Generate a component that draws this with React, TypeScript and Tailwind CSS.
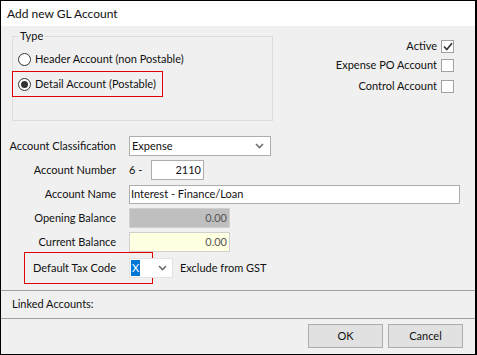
import React from 'react';

const Chevron = () => (
  <svg width="9" height="6" viewBox="0 0 9 6" className="shrink-0">
    <polyline points="1,1 4.5,4.5 8,1" fill="none" stroke="#6d6d6d" strokeWidth="1.6" />
  </svg>
);

const Check = ({ checked }: { checked?: boolean }) => (
  <div className="w-[13px] h-[13px] border border-[#a0a0a0] bg-white flex items-center justify-center">
    {checked && (
      <svg width="10" height="9" viewBox="0 0 10 9">
        <polyline points="1,4.5 3.8,7.5 9,1.2" fill="none" stroke="#333" strokeWidth="1.6" />
      </svg>
    )}
  </div>
);

const Radio = ({ checked }: { checked?: boolean }) => (
  <div className="w-[13px] h-[13px] shrink-0 rounded-full border border-[#333] bg-white flex items-center justify-center">
    {checked && <div className="w-[7px] h-[7px] rounded-full bg-[#333]" />}
  </div>
);

const Row = ({ label, children }: { label: string; children: React.ReactNode }) => (
  <div className="flex items-center h-[24px]">
    <div className="w-[115px] text-right shrink-0">{label}</div>
    <div className="ml-[13px] flex items-center gap-[7px] flex-1">{children}</div>
  </div>
);

export default function App() {
  return (
    <div className="w-[477px] h-[355px] border border-black border-r-2 bg-[#f0f0f0] flex flex-col text-[11px] whitespace-nowrap text-[#111] font-['Lato','Liberation_Sans',sans-serif]">
      <div className="h-[25px] bg-white flex items-center px-[6px] text-[12px] shrink-0">Add new GL Account</div>

      <div className="flex pt-[3px]">
        <fieldset className="ml-[11px] w-[261px] h-[92px] border border-[#dcdcdc] px-0">
          <legend className="ml-[5px] px-[2px] leading-[14px]">Type</legend>
          <div className="flex items-center h-[23px] mt-[5px] pl-[5px] gap-[4px]">
            <Radio />
            <span>Header Account (non Postable)</span>
          </div>
          <div className="-ml-[1px] w-[151px] h-[26px] border border-[#e00000] flex items-center pl-[5px] gap-[4px]">
            <Radio checked />
            <span>Detail Account (Postable)</span>
          </div>
        </fieldset>

        <div className="flex-1 flex flex-col items-end pr-[21px] pt-[10px] gap-[5px]">
          <div className="flex items-center gap-[4px] h-[14px]">
            <span>Active</span>
            <Check checked />
          </div>
          <div className="flex items-center gap-[4px] h-[14px]">
            <span>Expense PO Account</span>
            <Check />
          </div>
          <div className="flex items-center gap-[4px] h-[14px] mt-[2px]">
            <span>Control Account</span>
            <Check />
          </div>
        </div>
      </div>

      <div className="flex flex-col mt-[13px]">
        <Row label="Account Classification">
          <div className="w-[142px] h-[20px] bg-white border border-[#adadad] flex items-center justify-between pl-[2px] pr-[6px]">
            <span>Expense</span>
            <Chevron />
          </div>
        </Row>
        <Row label="Account Number">
          <span className="w-[15px]">6 -</span>
          <div className="w-[53px] h-[20px] bg-white border border-[#adadad] flex items-center justify-end pr-[2px]">2110</div>
        </Row>
        <Row label="Account Name">
          <div className="w-[331px] h-[19px] bg-white border border-[#adadad] flex items-center pl-[1px]">Interest - Finance/Loan</div>
        </Row>
        <Row label="Opening Balance">
          <div className="w-[101px] h-[20px] bg-[#bfbfbf] border border-[#d0d0d0] flex items-center justify-end pr-[2px] text-[#555]">0.00</div>
        </Row>
        <Row label="Current Balance">
          <div className="w-[101px] h-[20px] bg-[#ffffe1] border border-[#d0d0d0] flex items-center justify-end pr-[2px] text-[#555]">0.00</div>
        </Row>
        <div className="flex items-center h-[26px] mt-[1px]">
          <div className="ml-[23px] w-[129px] h-[32px] border border-[#e00000] flex items-center justify-end pr-[36px]">
            Default Tax Code
          </div>
          <div className="-ml-[24px] w-[44px] h-[20px] bg-white border border-[#e3e3e3] flex items-center justify-between pl-[1px] pr-[5px]">
            <span className="bg-[#0078d7] text-white px-[1px] leading-[16px]">X</span>
            <Chevron />
          </div>
          <span className="ml-[7px]">Exclude from GST</span>
        </div>
      </div>

      <div className="mt-[9px] border-t border-[#a0a0a0] h-[28px] flex items-center px-[11px]">Linked Accounts:</div>
      <div className="border-t border-[#a0a0a0] flex justify-end gap-[5px] pr-[12px] pt-[5px]">
        <button className="w-[75px] h-[24px] bg-[#e1e1e1] border border-[#adadad]">OK</button>
        <button className="w-[75px] h-[24px] bg-[#e1e1e1] border border-[#adadad]">Cancel</button>
      </div>
    </div>
  );
}
